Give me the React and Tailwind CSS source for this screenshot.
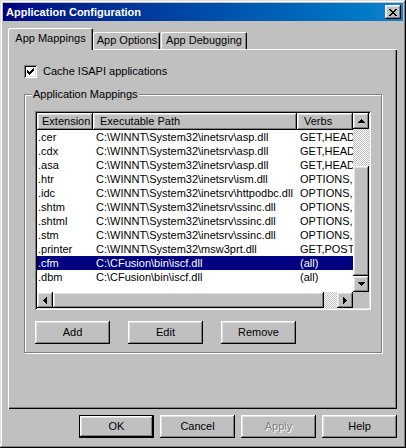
import React from 'react';

// Win9x style bevels
const raised = 'shadow-[inset_-1px_-1px_#000,inset_1px_1px_#fff,inset_-2px_-2px_#808080,inset_2px_2px_#dfdfdf]';
const sunken = 'shadow-[inset_1px_1px_#808080,inset_-1px_-1px_#fff,inset_2px_2px_#000,inset_-2px_-2px_#dfdfdf]';
const dither = 'bg-[image:conic-gradient(#fff_25%,#c0c0c0_0_50%,#fff_0_75%,#c0c0c0_0)] bg-[length:2px_2px]';

const rows = [
    ['.cer', 'C:\\WINNT\\System32\\inetsrv\\asp.dll', 'GET,HEAD,POST,TRACE'],
    ['.cdx', 'C:\\WINNT\\System32\\inetsrv\\asp.dll', 'GET,HEAD,POST,TRACE'],
    ['.asa', 'C:\\WINNT\\System32\\inetsrv\\asp.dll', 'GET,HEAD,POST,TRACE'],
    ['.htr', 'C:\\WINNT\\System32\\inetsrv\\ism.dll', 'OPTIONS,GET,HEAD,POST'],
    ['.idc', 'C:\\WINNT\\System32\\inetsrv\\httpodbc.dll', 'OPTIONS,GET,HEAD,POST'],
    ['.shtm', 'C:\\WINNT\\System32\\inetsrv\\ssinc.dll', 'OPTIONS,GET,HEAD,POST'],
    ['.shtml', 'C:\\WINNT\\System32\\inetsrv\\ssinc.dll', 'OPTIONS,GET,HEAD,POST'],
    ['.stm', 'C:\\WINNT\\System32\\inetsrv\\ssinc.dll', 'OPTIONS,GET,HEAD,POST'],
    ['.printer', 'C:\\WINNT\\System32\\msw3prt.dll', 'GET,POST'],
    ['.cfm', 'C:\\CFusion\\bin\\iscf.dll', '(all)'],
    ['.dbm', 'C:\\CFusion\\bin\\iscf.dll', '(all)'],
];

function Arrow({ dir }) {
    // pixel triangles, drawn row by row
    if (dir === 'up' || dir === 'down') {
        const r = dir === 'up' ? [0, 1, 2, 3] : [3, 2, 1, 0];
        return (
            <svg width="7" height="4" shapeRendering="crispEdges">
                {r.map((n, i) => <rect key={i} x={3 - n} y={i} width={n * 2 + 1} height="1" fill="#000" />)}
            </svg>
        );
    }
    const c = dir === 'left' ? [0, 1, 2, 3] : [3, 2, 1, 0];
    return (
        <svg width="4" height="7" shapeRendering="crispEdges">
            {c.map((n, i) => <rect key={i} x={i} y={3 - n} width="1" height={n * 2 + 1} fill="#000" />)}
        </svg>
    );
}

function ScrollBtn({ dir }) {
    return (
        <div className={`w-[16px] h-[16px] shrink-0 bg-[#c0c0c0] flex items-center justify-center ${raised}`}>
            <Arrow dir={dir} />
        </div>
    );
}

function CloseGlyph() {
    const px = [
        [0, 0, 2], [6, 0, 2], [1, 1, 2], [5, 1, 2], [2, 2, 4], [3, 3, 2],
        [2, 4, 4], [1, 5, 2], [5, 5, 2], [0, 6, 2], [6, 6, 2],
    ];
    return (
        <svg width="8" height="7" shapeRendering="crispEdges">
            {px.map(([x, y, w], i) => <rect key={i} x={x} y={y} width={w} height="1" fill="#000" />)}
        </svg>
    );
}

function CheckGlyph() {
    const px = [
        [6, 0, 1], [5, 1, 2], [0, 2, 1], [4, 2, 3], [0, 3, 2], [3, 3, 3],
        [0, 4, 5], [1, 5, 3], [2, 6, 1],
    ];
    return (
        <svg width="7" height="7" shapeRendering="crispEdges">
            {px.map(([x, y, w], i) => <rect key={i} x={x} y={y} width={w} height="1" fill="#000" />)}
        </svg>
    );
}

function Button({ children, isDefault, disabled }) {
    const bevel = isDefault
        ? 'shadow-[inset_0_0_0_1px_#000,inset_-2px_-2px_#000,inset_2px_2px_#fff,inset_-3px_-3px_#808080,inset_3px_3px_#dfdfdf]'
        : raised;
    return (
        <div className={`w-[75px] h-[23px] shrink-0 bg-[#c0c0c0] flex items-center justify-center ${bevel}`}>
            <span className={disabled ? 'text-[#808080] [text-shadow:1px_1px_0_#fff]' : 'text-black'}>{children}</span>
        </div>
    );
}

function HeaderCell({ w, pl, children }) {
    return (
        <div className={`${w} ${pl} h-[17px] shrink-0 flex items-center pb-[1px] bg-[#c0c0c0] overflow-hidden whitespace-nowrap ${raised}`}>
            {children}
        </div>
    );
}

function ListView() {
    return (
        <div className={`w-[336px] h-[199px] p-[2px] bg-white ${sunken}`}>
            <div className="flex">
                <div className="w-[316px] h-[179px] overflow-hidden">
                    <div className="flex">
                        <HeaderCell w="w-[56px]" pl="pl-[5px]">Extension</HeaderCell>
                        <HeaderCell w="w-[204px]" pl="pl-[7px]">Executable Path</HeaderCell>
                        <HeaderCell w="w-[56px]" pl="pl-[7px]">Verbs</HeaderCell>
                    </div>
                    {rows.map(([ext, path, verbs]) => {
                        const sel = ext === '.cfm';
                        return (
                            <div key={ext} className={`flex h-[14px] leading-[14px] whitespace-nowrap ${sel ? 'bg-[#000080] text-white' : 'text-black'}`}>
                                <div className="w-[56px] pl-[1px] overflow-hidden shrink-0">{ext}</div>
                                <div className="w-[204px] pl-[3px] overflow-hidden shrink-0">{path}</div>
                                <div className="w-[56px] pl-[3px] overflow-hidden shrink-0">{verbs}</div>
                            </div>
                        );
                    })}
                </div>
                {/* vertical scrollbar */}
                <div className="w-[16px] h-[179px] flex flex-col">
                    <ScrollBtn dir="up" />
                    <div className={`h-[37px] ${dither}`}></div>
                    <div className={`h-[110px] bg-[#c0c0c0] ${raised}`}></div>
                    <ScrollBtn dir="down" />
                </div>
            </div>
            {/* horizontal scrollbar */}
            <div className="flex h-[16px]">
                <ScrollBtn dir="left" />
                <div className={`w-[271px] h-[16px] bg-[#c0c0c0] ${raised}`}></div>
                <div className={`w-[13px] h-[16px] ${dither}`}></div>
                <ScrollBtn dir="right" />
                <div className="w-[16px] h-[16px] bg-[#c0c0c0]"></div>
            </div>
        </div>
    );
}

export default function App() {
    return (
        <div className="w-[406px] h-[448px] bg-[#c0c0c0] p-[3px] font-['Liberation_Sans',Arial,sans-serif] text-[11px] text-black shadow-[inset_-1px_-1px_#000,inset_1px_1px_#dfdfdf,inset_-2px_-2px_#808080,inset_2px_2px_#fff]">
            {/* title bar */}
            <div className="h-[18px] flex items-center justify-between pl-[3px] pr-[2px] bg-linear-to-r from-[#000080] to-[#1084d0]">
                <span className="text-white font-bold">Application Configuration</span>
                <div className={`w-[16px] h-[14px] bg-[#c0c0c0] flex items-center justify-center ${raised}`}>
                    <CloseGlyph />
                </div>
            </div>

            <div className="px-[5px] mt-[7px]">
                {/* tabs */}
                <div className="flex items-end h-[21px]">
                    <div className="relative z-10 w-[85px] h-[22px] -mb-px bg-[#c0c0c0] rounded-t-[2px] flex items-center justify-center pb-[2px] shadow-[inset_1px_1px_#fff,inset_-1px_0_#000,inset_-2px_0_#808080]">
                        App Mappings
                    </div>
                    <div className="w-[67px] h-[17px] bg-[#c0c0c0] rounded-t-[2px] flex items-center justify-center pl-[1px] shadow-[inset_1px_1px_#fff,inset_-1px_0_#000,inset_-2px_0_#808080]">
                        App Options
                    </div>
                    <div className="ml-[1px] w-[86px] h-[17px] bg-[#c0c0c0] rounded-t-[2px] flex items-center justify-center shadow-[inset_1px_1px_#fff,inset_-1px_0_#000,inset_-2px_0_#808080]">
                        App Debugging
                    </div>
                </div>

                {/* tab page */}
                <div className="w-[389px] h-[360px] pt-[16px] pl-[16px] bg-[#c0c0c0] shadow-[inset_1px_1px_#fff,inset_-1px_-1px_#000,inset_-2px_-2px_#808080]">
                    <div className="flex items-center gap-[6px] h-[13px]">
                        <div className={`w-[13px] h-[13px] bg-white flex items-center justify-center ${sunken}`}>
                            <CheckGlyph />
                        </div>
                        <span>Cache ISAPI applications</span>
                    </div>

                    <div className="relative mt-[16px] w-[358px] h-[259px] border border-[#808080] pt-[16px] pl-[10px] shadow-[inset_1px_1px_#fff,1px_1px_#fff]">
                        <span className="absolute left-[7px] top-[-7px] px-[1px] leading-[13px] bg-[#c0c0c0]">Application Mappings</span>
                        <ListView />
                        <div className="flex gap-[18px] mt-[11px]">
                            <Button>Add</Button>
                            <Button>Edit</Button>
                            <Button>Remove</Button>
                        </div>
                    </div>
                </div>

                {/* dialog buttons */}
                <div className="w-[389px] flex justify-end gap-[6px] mt-[6px]">
                    <Button isDefault>OK</Button>
                    <Button>Cancel</Button>
                    <Button disabled>Apply</Button>
                    <Button>Help</Button>
                </div>
            </div>
        </div>
    );
}
